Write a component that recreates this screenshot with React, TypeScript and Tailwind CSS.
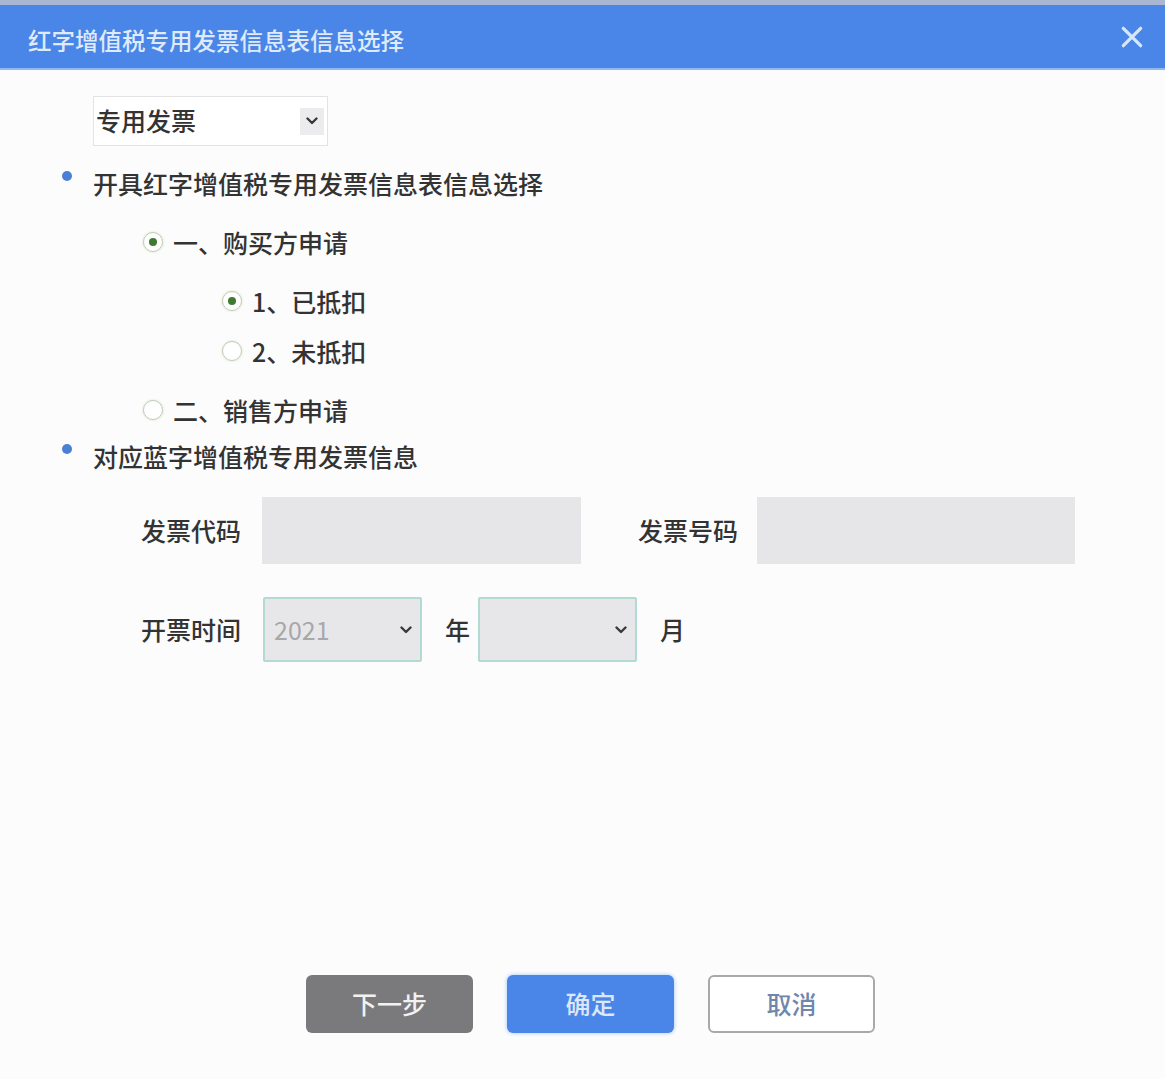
import { useState } from "react";

const font = { fontFamily: '"Noto Sans CJK SC", "Noto Sans", sans-serif' };

function Chevron({ className = "" }: { className?: string }) {
  return (
    <svg viewBox="0 0 12 8" className={className} fill="none">
      <path d="M1.5 1.5 6 6l4.5-4.5" stroke="#3a3a3a" strokeWidth="2.4" strokeLinecap="round" strokeLinejoin="round" />
    </svg>
  );
}

function Radio({ checked, label, onClick }: { checked: boolean; label: string; onClick: () => void }) {
  return (
    <button type="button" onClick={onClick} className="flex h-[30px] items-center gap-[10px] text-left">
      <span className="flex h-[20px] w-[20px] items-center justify-center rounded-full border border-[#c4cabf] bg-white shadow-[0_0_3px_#d6ebb8]">
        {checked && <span className="h-[8px] w-[8px] rounded-full bg-[#3f7a2e]" />}
      </span>
      <span className="text-[25px] font-medium leading-[30px] text-[#333]">{label}</span>
    </button>
  );
}

function Bullet({ children }: { children: string }) {
  return (
    <div className="relative flex h-[30px] items-center">
      <span className="absolute left-[-31px] top-[3px] h-[10px] w-[10px] rounded-full bg-[#4a7fd6]" />
      <span className="text-[25px] font-medium leading-[30px] text-[#333]">{children}</span>
    </div>
  );
}

export default function App() {
  const [side, setSide] = useState<"buyer" | "seller">("buyer");
  const [deducted, setDeducted] = useState(true);

  return (
    <div style={font} className="flex h-[1079px] w-[1165px] flex-col bg-[#fcfcfd]">
      <div className="h-[5px] bg-[#a9b7d3]" />
      <div className="flex h-[65px] items-center justify-between border-b-2 border-[#8fb8f0] bg-[#4a86e8] pl-[28px] pr-[20px]">
        <span className="pt-[8px] text-[23.5px] font-medium leading-none text-[#dfeafb]">红字增值税专用发票信息表信息选择</span>
        <svg viewBox="0 0 24 24" className="h-[26px] w-[26px]" fill="none">
          <path d="M4 4l16 16M20 4 4 20" stroke="#d7e7fb" strokeWidth="3" strokeLinecap="round" />
        </svg>
      </div>

      <div className="flex flex-1 flex-col pl-[93px]">
        <div className="mt-[26px] flex h-[50px] w-[235px] items-center justify-between border border-[#e3e3e6] bg-white pl-[2px] pr-[3px]">
          <span className="text-[25px] font-medium text-[#333]">专用发票</span>
          <span className="flex h-[27px] w-[24px] items-center justify-center bg-[#ececee]">
            <Chevron className="h-[8px] w-[12px]" />
          </span>
        </div>

        <div className="mt-[22px]">
          <Bullet>开具红字增值税专用发票信息表信息选择</Bullet>
        </div>

        <div className="ml-[50px] mt-[29px]">
          <Radio checked={side === "buyer"} label="一、购买方申请" onClick={() => setSide("buyer")} />
        </div>
        <div className="ml-[129px] mt-[29px] flex flex-col gap-[20px]">
          <Radio checked={side === "buyer" && deducted} label="1、已抵扣" onClick={() => setDeducted(true)} />
          <Radio checked={side === "buyer" && !deducted} label="2、未抵扣" onClick={() => setDeducted(false)} />
        </div>
        <div className="ml-[50px] mt-[29px]">
          <Radio checked={side === "seller"} label="二、销售方申请" onClick={() => setSide("seller")} />
        </div>

        <div className="mt-[16px]">
          <Bullet>对应蓝字增值税专用发票信息</Bullet>
        </div>

        <div className="ml-[48px] mt-[26px] flex items-center text-[25px] font-medium text-[#333]">
          <span className="w-[121px]">发票代码</span>
          <div className="h-[67px] w-[319px] bg-[#e6e6e9]" />
          <span className="ml-[57px] w-[119px]">发票号码</span>
          <div className="h-[67px] w-[318px] bg-[#e6e6e9]" />
        </div>

        <div className="ml-[48px] mt-[33px] flex items-center text-[25px] font-medium text-[#333]">
          <span className="w-[122px]">开票时间</span>
          <div className="flex h-[65px] w-[159px] items-center justify-between rounded-[2px] border-2 border-[#b3d9d3] bg-[#e7e7ea] pl-[9px] pr-[8px]">
            <span className="font-normal text-[#a8a8ab]">2021</span>
            <Chevron className="h-[8px] w-[12px]" />
          </div>
          <span className="ml-[23px] mr-[8px]">年</span>
          <div className="flex h-[65px] w-[159px] items-center justify-end rounded-[2px] border-2 border-[#b3d9d3] bg-[#e7e7ea] pr-[8px]">
            <Chevron className="h-[8px] w-[12px]" />
          </div>
          <span className="ml-[23px]">月</span>
        </div>

        <div className="mb-[46px] mt-auto flex gap-[34px] pl-[213px] text-[25px] font-medium">
          <button type="button" className="h-[58px] w-[167px] rounded-[6px] bg-[#7a7a7d] text-[#f2f2f2]">下一步</button>
          <button type="button" className="h-[58px] w-[167px] rounded-[6px] bg-[#4a86e8] text-[#dbe7fa] shadow-[0_0_4px_#9fc4f5]">确定</button>
          <button type="button" className="h-[58px] w-[167px] rounded-[6px] border-2 border-[#a9a9ab] bg-white text-[#6f86ad]">取消</button>
        </div>
      </div>
    </div>
  );
}
